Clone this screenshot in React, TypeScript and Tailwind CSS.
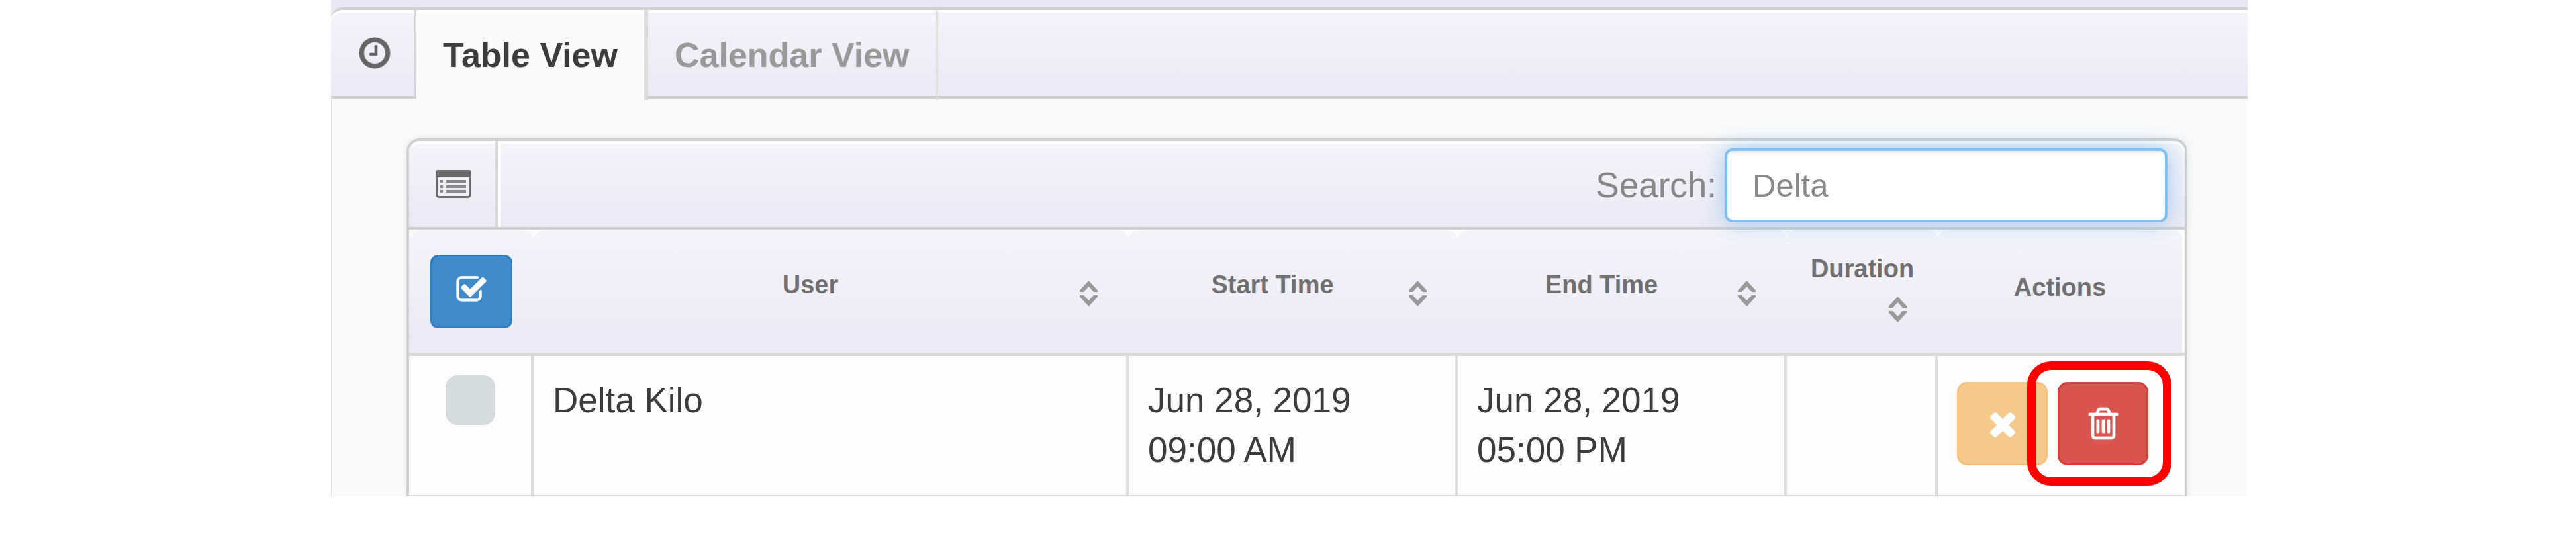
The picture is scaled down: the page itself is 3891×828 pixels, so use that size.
import React from "react";

const iconPaths = {
  clock: "M1024 544v448q0 14-9 23t-23 9h-320q-14 0-23-9t-9-23v-64q0-14 9-23t23-9h224v-352q0-14 9-23t23-9h64q14 0 23 9t9 23zm416 352q0-148-73-273t-198-198-273-73-273 73-198 198-73 273 73 273 198 198 273 73 273-73 198-198 73-273zm224 0q0 209-103 385.5t-279.5 279.5-385.5 103-385.5-103-279.5-279.5-103-385.5 103-385.5 279.5-279.5 385.5-103 385.5 103 279.5 279.5 103 385.5z",
  check: "M1472 930v318q0 119-84.5 203.5t-203.5 84.5h-832q-119 0-203.5-84.5t-84.5-203.5v-832q0-119 84.5-203.5t203.5-84.5h832q63 0 117 25 15 7 18 23 3 17-9 29l-49 49q-10 10-23 10-3 0-9-2-23-6-45-6h-832q-66 0-113 47t-47 113v832q0 66 47 113t113 47h832q66 0 113-47t47-113v-254q0-13 9-22l64-64q10-10 23-10 6 0 12 3 20 8 20 29zm231-489l-814 814q-24 24-57 24t-57-24l-430-430q-24-24-24-57t24-57l110-110q24-24 57-24t57 24l263 263 647-647q24-24 57-24t57 24l110 110q24 24 24 57t-24 57z",
  times: "M1490 1322q0 40-28 68l-136 136q-28 28-68 28t-68-28l-294-294-294 294q-28 28-68 28t-68-28l-136-136q-28-28-28-68t28-68l294-294-294-294q-28-28-28-68t28-68l136-136q28-28 68-28t68 28l294 294 294-294q28-28 68-28t68 28l136 136q28 28 28 68t-28 68l-294 294 294 294q28 28 28 68z",
  trash: "M704 736v576q0 14-9 23t-23 9h-64q-14 0-23-9t-9-23v-576q0-14 9-23t23-9h64q14 0 23 9t9 23zm256 0v576q0 14-9 23t-23 9h-64q-14 0-23-9t-9-23v-576q0-14 9-23t23-9h64q14 0 23 9t9 23zm256 0v576q0 14-9 23t-23 9h-64q-14 0-23-9t-9-23v-576q0-14 9-23t23-9h64q14 0 23 9t9 23zm128 724v-948h-896v948q0 22 7 40.5t14.5 27 10.5 8.5h832q3 0 10.5-8.5t14.5-27 7-40.5zm-672-1076h448l-48-117q-7-9-17-11h-317q-10 2-17 11zm928 32v64q0 14-9 23t-23 9h-96v948q0 83-47 143.5t-113 60.5h-832q-66 0-113-58.5t-47-141.5v-952h-96q-14 0-23-9t-9-23v-64q0-14 9-23t23-9h309l70-167q15-37 54-63t79-26h320q40 0 79 26t54 63l70 167h309q14 0 23 9t9 23z",
};

const Icon = ({ name, className }: { name: keyof typeof iconPaths; className: string }) => (
  <svg viewBox="0 0 1792 1792" fill="currentColor" stroke="currentColor" strokeWidth="24" className={className} aria-hidden="true">
    <path d={iconPaths[name]} />
  </svg>
);

const ListIcon = () => (
  <svg viewBox="0 0 54 42" className="w-[54px] h-[42px] text-[#6a6a6a]" aria-hidden="true">
    <rect x="1.5" y="1.5" width="51" height="39" rx="3.5" fill="none" stroke="currentColor" strokeWidth="3" />
    <path d="M0 11V4q0-4 4-4h46q4 0 4 4v7z" fill="currentColor" />
    <path d="M7 17h4M7 25h4M7 32h4M16 17h30M16 25h30M16 32h30" stroke="#888" strokeWidth="4" />
  </svg>
);

const SortIcon = () => (
  <span className="flex w-[63px] h-[74px] items-center justify-center">
    <svg viewBox="0 0 27 39" className="w-[27px] h-[39px] text-[#999]" fill="currentColor" aria-hidden="true">
      <path d="M13.5 0L27 14.5V17H21L13.5 9L6 17H0V14.5z" />
      <path d="M13.5 39L27 24.5V22H21L13.5 30L6 22H0V24.5z" />
    </svg>
  </span>
);

const thClass = "h-[186px] p-0 rounded-t-[16px] bg-linear-to-b from-[#f5f4f9] to-[#ebe9f4] last:border-r-4 last:border-[#fafafc]";
const tdClass = "h-[210px] px-[29px] pt-[29px] pb-0 align-top border-r-4 border-[#ddd] last:border-r-0";

const SortHeader = ({ label }: { label: string }) => (
  <th className={thClass}>
    <button type="button" className="flex flex-wrap items-start justify-end w-full pt-[6px] px-[29px] font-bold">
      <span className="grow text-center">{label}</span>
      <SortIcon />
    </button>
  </th>
);

const rows = [
  { user: "Delta Kilo", start: ["Jun 28, 2019", "09:00 AM"], end: ["Jun 28, 2019", "05:00 PM"], duration: "" },
];

const TabBar = () => (
  <nav className="flex h-[138px] border-y-4 border-[#d0d0d0] rounded-tl-[18px] bg-linear-to-b from-[#f5f4f9] to-[#ebe9f4] text-[52px] font-bold shadow-[inset_0_4px_0_#fff]">
    <div className="flex w-[129px] pl-[6px] items-center justify-center border-r-4 border-[#d8d8d8] text-[#666]">
      <Icon name="clock" className="w-[54px] h-[54px]" />
    </div>
    <a href="#table" className="relative flex items-center -mb-[6px] px-10 border-r-6 border-[#dcdcdc] bg-[#fafafa] text-[#3c3c3c] shadow-[inset_0_4px_0_#fff]">Table View</a>
    <a href="#calendar" className="relative flex items-center -mb-[6px] px-10 border-r-3 border-[#dfdfdf] text-[#999]">Calendar View</a>
  </nav>
);

const PanelHeader = () => (
  <div className="flex h-[134px] items-stretch border-b-4 border-[#d0d0d0] rounded-t-[18px] bg-linear-to-b from-[#f5f4f9] to-[#ebe9f4] shadow-[inset_0_4px_0_#fff]">
    <div className="flex w-[134px] pl-1 items-center justify-center border-r-4 border-[#d8d8d8]">
      <ListIcon />
    </div>
    <div className="flex grow items-center justify-end pt-1 pr-[26px] border-l-4 border-white">
      <label htmlFor="search" className="pr-3 text-[53px] text-[#888]">Search:</label>
      <input
        id="search"
        type="text"
        defaultValue="Delta"
        className="relative z-10 w-[669px] h-[112px] px-[38px] border-4 border-[#7fbff2] rounded-[12px] bg-white text-[49px] text-[#888] outline-none shadow-[inset_0_4px_4px_rgba(0,0,0,0.05),0_0_32px_rgba(102,175,233,0.6)]"
      />
    </div>
  </div>
);

const App = () => {
  return (
    <div className="min-h-screen pl-[500px] pr-[496px] bg-white font-['Liberation_Sans',Arial,sans-serif]">
      <main className="overflow-hidden pt-[11px] bg-[#e9e8f2]">
        <TabBar />
        <div className="pt-[60px] pl-[113px] pr-[91px] bg-[#fafafa] border-l border-[#e4e4e4]">
          <section className="border-4 border-b-0 border-[#d0d0d0] rounded-t-[20px] bg-[#fdfdfd] shadow-[0_0_12px_rgba(0,0,0,0.08)]">
            <PanelHeader />
            <table className="w-full table-fixed border-separate border-spacing-0">
              <colgroup>
                <col className="w-[188px]" />
                <col />
                <col className="w-[497px]" />
                <col className="w-[497px]" />
                <col className="w-[228px]" />
                <col className="w-[373px]" />
              </colgroup>
              <thead className="text-[38px] leading-[48px] text-[#707070]">
                <tr className="bg-[#fcfcfd]">
                  <th className={thClass}>
                    <button type="button" aria-label="Select all" className="inline-flex w-[124px] h-[111px] pb-1 items-center justify-center align-middle border-3 border-[#3080c4] rounded-[12px] bg-[#428bca] text-white">
                      <Icon name="check" className="w-[48px] h-[48px]" />
                    </button>
                  </th>
                  <SortHeader label="User" />
                  <SortHeader label="Start Time" />
                  <SortHeader label="End Time" />
                  <SortHeader label="Duration" />
                  <th className={thClass}>
                    <div className="pb-3">Actions</div>
                  </th>
                </tr>
              </thead>
              <tbody className="text-[53px] leading-[75px] text-[#3c3c3c]">
                <tr>
                  <td colSpan={6} className="h-[5px] p-0 bg-[#dadada]"></td>
                </tr>
                {rows.map((row) => (
                  <tr key={row.user}>
                    <td className={tdClass}>
                      <input type="checkbox" aria-label={"Select " + row.user} className="block appearance-none w-[75px] h-[75px] mx-auto rounded-[18px] bg-[#d6dbde]" />
                    </td>
                    <td className={tdClass}>{row.user}</td>
                    <td className={tdClass}>{row.start[0]}<br />{row.start[1]}</td>
                    <td className={tdClass}>{row.end[0]}<br />{row.end[1]}</td>
                    <td className={tdClass}>{row.duration}</td>
                    <td className={tdClass}>
                      <div className="flex gap-[15px] pt-[10px]">
                        <button type="button" aria-label="Cancel" className="flex w-[137px] h-[126px] items-center justify-center border-3 border-[#f4c27a] rounded-[15px] bg-[#f5c98b] text-white">
                          <Icon name="times" className="w-[56px] h-[56px]" />
                        </button>
                        <div className="relative">
                          <button type="button" aria-label="Delete" className="flex w-[137px] h-[126px] items-center justify-center border-3 border-[#d43f3a] rounded-[15px] bg-[#d9534f] text-white">
                            <Icon name="trash" className="w-[56px] h-[56px]" />
                          </button>
                          <span className="absolute -left-[46px] -right-[35px] -top-[31px] -bottom-[31px] border-13 border-[#f00] rounded-[36px] pointer-events-none"></span>
                        </div>
                      </div>
                    </td>
                  </tr>
                ))}
              </tbody>
            </table>
            <div className="h-[2px] bg-[#ddd]"></div>
          </section>
        </div>
      </main>
    </div>
  );
};

export default App;
